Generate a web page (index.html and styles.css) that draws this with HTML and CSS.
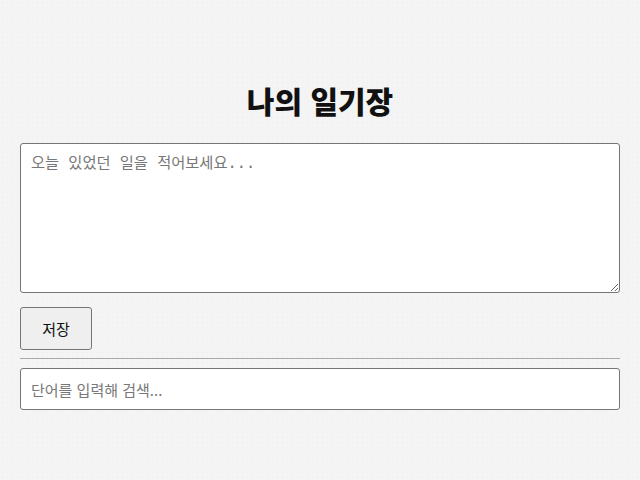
FILE: index.html
```html
<!DOCTYPE html>
<html lang="ko">
<head>
    <meta charset="UTF-8">
    <meta name="viewport" content="width=device-width, initial-scale=1.0">
    <title>나의 일기장</title>
    <link rel="stylesheet" href="styles.css">
</head>
<body>
    <div class="container">
        <h1>나의 일기장</h1>
        <textarea class="diary-input" placeholder="오늘 있었던 일을 적어보세요..."></textarea>
        <button class="save-btn">저장</button>
        <hr>
        <input class="search-input" type="text" placeholder="단어를 입력해 검색...">
    </div>
</body>
</html>
```

FILE: styles.css
```css
body {
    margin: 0;
    font-family: "Noto Sans CJK KR", "Noto Sans", sans-serif;
    background-color: #f4f4f4;
    background-image: radial-gradient(#ececec 0.6px, transparent 0.8px);
    background-size: 5px 5px;
    color: #111;
}

.container {
    max-width: 600px;
    margin: 0 auto;
    padding: 60px 20px 20px;
}

h1 {
    text-align: center;
    font-size: 30px;
    line-height: 40px;
    font-weight: 900;
    margin: 20px 0 23px;
}

.diary-input {
    display: block;
    box-sizing: border-box;
    width: 100%;
    height: 150px;
    padding: 6px 10px;
    font-family: "DejaVu Sans Mono", "Noto Sans CJK KR", monospace;
    font-size: 15.3px;
    border: 1px solid #767676;
    border-radius: 3px;
    background: white;
}

.diary-input::placeholder {
    color: #777;
}

.save-btn {
    display: block;
    margin-top: 14px;
    width: 72px;
    height: 43px;
    font-family: "Noto Sans CJK KR", sans-serif;
    font-size: 15px;
    background-color: #efefef;
    border: 1px solid #767676;
    border-radius: 3px;
    color: #111;
}

hr {
    border: none;
    border-top: 1px solid #aaa;
    margin: 8px 0 9px;
}

.search-input {
    display: block;
    box-sizing: border-box;
    width: 100%;
    height: 42px;
    padding: 8px 10px;
    font-family: "Noto Sans CJK KR", sans-serif;
    font-size: 15px;
    border: 1px solid #767676;
    border-radius: 3px;
    background: white;
}

.search-input::placeholder {
    color: #777;
}
```
